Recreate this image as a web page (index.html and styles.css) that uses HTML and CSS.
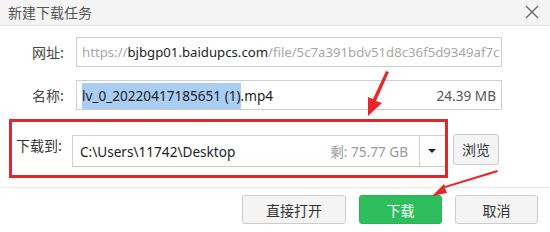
FILE: index.html
```html
<!DOCTYPE html>
<html lang="zh-CN">
<head>
<meta charset="utf-8">
<title>新建下载任务</title>
<link rel="stylesheet" href="styles.css">
</head>
<body>
<div class="dialog">
  <div class="titlebar">
    <span class="title">新建下载任务</span>
    <svg class="close" width="14" height="14" viewBox="0 0 14 14"><path d="M1 1L13 13M13 1L1 13" stroke="#666" stroke-width="1.3" fill="none"/></svg>
  </div>
  <div class="form">
    <div class="row row-url">
      <label class="label">网址:</label>
      <div class="input url"><span class="muted">https://</span><span class="host">bjbgp01.baidupcs.com</span><span class="muted">/file/5c7a391bdv51d8c36f5d9349af7c</span></div>
    </div>
    <div class="row row-name">
      <label class="label">名称:</label>
      <div class="input name"><span class="fname"><span class="sel">lv_0_20220417185651 (1)</span>.mp4</span><span class="size">24.39 MB</span></div>
    </div>
    <div class="row row-path">
      <div class="highlight">
        <label class="label2">下载到:</label>
        <div class="input path">
          <span class="ptext">C:\Users\11742\Desktop</span>
          <span class="free">剩: 75.77 GB</span>
          <span class="drop"><span class="tri"></span></span>
        </div>
      </div>
      <button class="btn browse">浏览</button>
    </div>
  </div>
  <div class="footer">
    <button class="btn open">直接打开</button>
    <button class="btn primary">下载</button>
    <button class="btn cancel">取消</button>
  </div>
  <svg class="arrows" width="550" height="232" viewBox="0 0 550 232">
    <path d="M389 72 L376 101 L382 103 L368 116 L368 97 L373 99 L386 71 Z" fill="#e8262c"/>
    <path d="M498 172 L445 188 L447 193 L432 196 L444 184 L445 186 L497 170 Z" fill="#e8262c"/>
  </svg>
</div>
</body>
</html>
```
FILE: styles.css
```css
* { box-sizing: border-box; }
html, body { margin: 0; padding: 0; background: #fff; }
body {
  width: 550px;
  height: 232px;
  overflow: hidden;
  font-family: "Noto Sans", "Noto Sans CJK SC", sans-serif;
  color: #333;
}
.dialog { position: relative; width: 550px; height: 232px; }
.titlebar {
  height: 26px;
  background: #f4f4f4;
  border-bottom: 1px solid #e4e4e4;
  display: flex;
  align-items: center;
  justify-content: space-between;
  padding: 0 11px 1px 8px;
}
.title { font-size: 14px; color: #555; font-family: "Noto Sans CJK SC", sans-serif; }
.close { display: block; }
.form { padding-top: 11px; }
.row { display: flex; align-items: center; }
.row-name { margin-top: 13px; }
.row-path { margin-top: 9px; margin-left: 9px; }
.label {
  width: 76px;
  padding-left: 32px;
  font-size: 14px;
  font-family: "Noto Sans CJK SC", sans-serif;
  color: #444;
}
.input {
  height: 30px;
  border: 1px solid #cfcfcf;
  background: #fff;
  display: flex;
  align-items: center;
  font-size: 13px;
  white-space: nowrap;
  overflow: hidden;
}
.url { width: 426px; padding-left: 5px; color: #222; font-size: 13.2px; }
.muted { color: #a8a8a8; }
.host { color: #222; }
.name { width: 426px; padding: 0 5px 0 5px; justify-content: space-between; align-items: stretch; font-size: 13.6px; }
.fname { display: flex; align-items: center; color: #222; }
.sel { background: #a9cdf3; height: 26px; margin-top: 1px; display: flex; align-items: center; }
.size { color: #555; display: flex; align-items: center; }
.highlight {
  width: 439px;
  height: 59px;
  border: 3px solid #e2262e;
  display: flex;
  align-items: center;
  padding-left: 4px;
  overflow: hidden;
}
.label2 {
  width: 57px;
  font-size: 14px;
  font-family: "Noto Sans CJK SC", sans-serif;
  color: #333;
  margin-top: -7px;
}
.path {
  width: 380px;
  height: 32px;
  padding-left: 7px;
  margin-top: 5px;
  font-size: 13.6px;
  border-right: none;
}
.ptext { color: #222; flex: 1; }
.free { color: #999; font-size: 13.6px; margin-right: 11px; }
.drop {
  width: 26px;
  height: 100%;
  border-left: 1px solid #cfcfcf;
  display: flex;
  align-items: center;
  justify-content: center;
}
.tri {
  width: 0; height: 0;
  border-left: 4px solid transparent;
  border-right: 4px solid transparent;
  border-top: 4px solid #222;
  margin-right: 2px;
}
.btn {
  font-family: "Noto Sans CJK SC", sans-serif;
  font-size: 14px;
  color: #333;
  background: #f4f4f4;
  border: 1px solid #cccccc;
  border-radius: 3px;
  padding: 0;
  height: 29px;
}
.browse { width: 46px; height: 31px; margin-left: 5px; margin-top: 1px; }
.footer {
  margin-top: 9px;
  border-top: 1px solid #e8e8e8;
  padding-top: 7px;
  display: flex;
  justify-content: flex-end;
  gap: 13px;
  padding-right: 12px;
}
.open { width: 104px; }
.primary { width: 83px; background: #2dbd5d; border-color: #2ab257; color: #fff; }
.cancel { width: 83px; }
.arrows { position: absolute; left: 0; top: 0; pointer-events: none; }
```
